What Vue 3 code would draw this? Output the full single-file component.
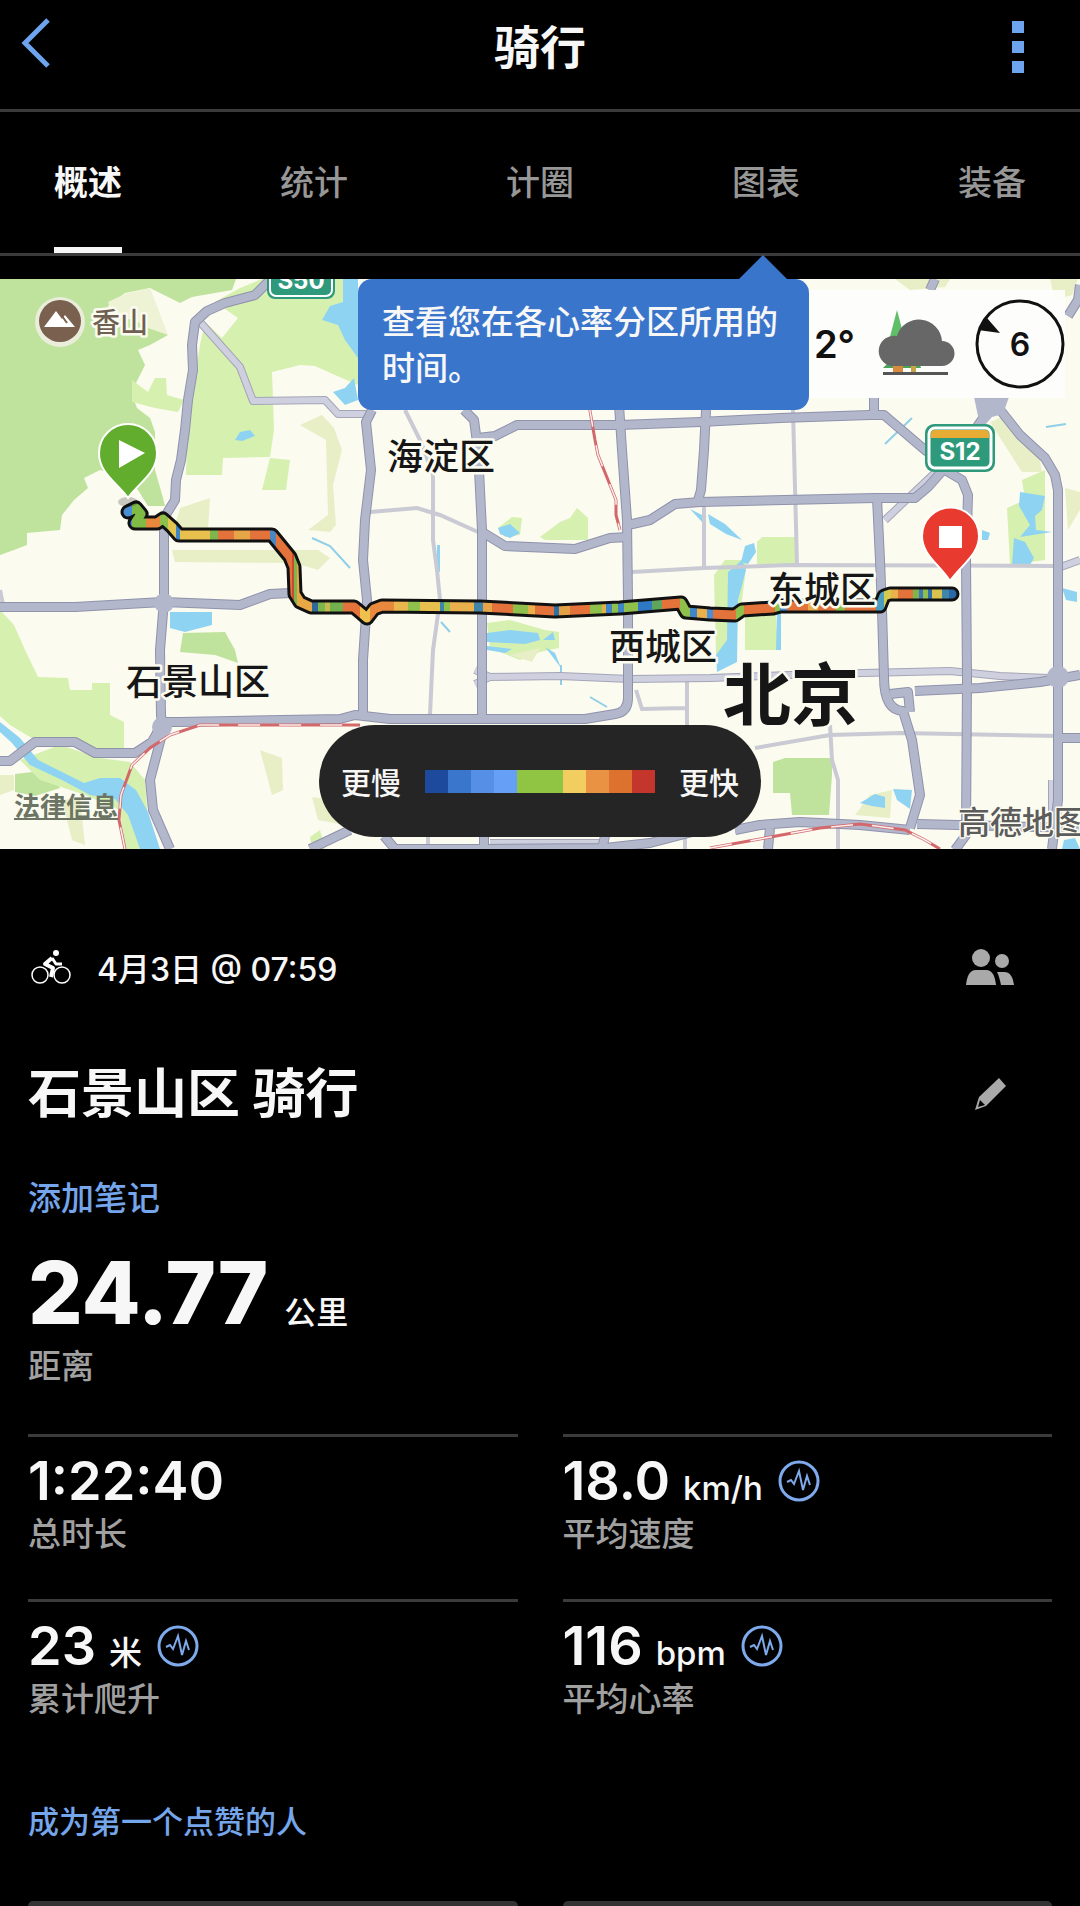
<template>
  <div class="page">
    <header class="header">
      <button class="icon-button" aria-label="返回">
        <svg width="32" height="52" viewBox="0 0 32 52">
          <path d="M28 3 5 26 28 49" fill="none" stroke="#6ea4ee" stroke-width="5" />
        </svg>
      </button>
      <h1>骑行</h1>
      <button class="icon-button" aria-label="更多">
        <svg width="12" height="52" viewBox="0 0 12 52" fill="#6ea4ee">
          <rect width="12" height="12" />
          <rect y="20" width="12" height="12" />
          <rect y="40" width="12" height="12" />
        </svg>
      </button>
    </header>

    <nav class="tabs">
      <button
        v-for="tab in tabs"
        :key="tab"
        :class="['tab', { active: tab === activeTab }]"
        @click="activeTab = tab"
      >{{ tab }}</button>
    </nav>

    <section class="map">
      <svg class="map-canvas" viewBox="0 279 1080 570" role="img" aria-label="骑行路线">
        <defs>
          <linearGradient id="speed" gradientUnits="userSpaceOnUse" x1="120" y1="0" x2="960" y2="0">
            <stop v-for="(stop, i) in routeStops" :key="i" :offset="stop.offset" :stop-color="stop.color" />
          </linearGradient>
        </defs>

        <rect y="279" width="1080" height="570" fill="#fbfbf0" />

        <!-- parks and fields -->
        <path v-for="(d, i) in forest" :key="'f' + i" :d="d" fill="#bfe39d" />
        <path v-for="(d, i) in parks" :key="'p' + i" :d="d" fill="#d6f0b0" />
        <path v-for="(d, i) in fields" :key="'b' + i" :d="d" fill="#e8efc6" />
        <path d="M108 302 125 294 150 288 168 335 148 328 138 322 112 312Z" fill="#eef3d5" />
        <path v-for="(d, i) in water" :key="'w' + i" :d="d" fill="#8fd3f2" />
        <path d="M312 538 330 546 350 568M885 444 912 418M1046 427 1066 424M590 697 607 707M441 622 450 632M561 665 561 685" fill="none" stroke="#8fcfe8" stroke-width="2" />

        <!-- roads -->
        <g fill="none" stroke="#c9cad3" stroke-width="4">
          <path v-for="(d, i) in minorRoads" :key="'m' + i" :d="d" />
        </g>
        <g fill="none" stroke-linejoin="round">
          <g stroke="#a4a5b8" stroke-width="8">
            <path v-for="(d, i) in lightRoads" :key="i" :d="d" />
          </g>
          <g stroke="#cfd0df" stroke-width="6">
            <path v-for="(d, i) in lightRoads" :key="i" :d="d" />
          </g>
          <g stroke="#8f92ab" stroke-width="10">
            <path v-for="(d, i) in mainRoads" :key="i" :d="d" />
          </g>
          <path d="M974 397H1009L1003 414 992 417 984 426 978 416Z" fill="#b3b7cc" />
          <circle cx="164" cy="603" r="10" fill="#b3b7cc" />
          <circle cx="1058" cy="677" r="11" fill="#b3b7cc" />
          <circle cx="162" cy="727" r="10" fill="#b3b7cc" />
          <g stroke="#b3b7cc" stroke-width="8">
            <path v-for="(d, i) in mainRoads" :key="i" :d="d" />
          </g>
        </g>

        <!-- railways -->
        <g fill="none">
          <g stroke="#d3686b" stroke-width="3">
            <path v-for="(d, i) in railways" :key="i" :d="d" />
          </g>
          <g stroke="#fbeeee" stroke-width="1.5" stroke-dasharray="22 19">
            <path v-for="(d, i) in railways" :key="i" :d="d" />
          </g>
        </g>

        <!-- recorded route -->
        <g fill="none" stroke-linecap="round" stroke-linejoin="round">
          <path :d="route" stroke="#111" stroke-width="15" />
          <path :d="route" stroke="url(#speed)" stroke-width="9" />
        </g>

        <!-- road shields -->
        <g class="shield">
          <rect x="267" y="254" width="68" height="45" rx="8" fill="#2f9a7b" />
          <rect x="270" y="257" width="62" height="39" rx="6" fill="none" stroke="#fff" stroke-width="2" />
          <text x="301" y="289">S50</text>
          <rect x="925" y="424" width="70" height="48" rx="9" fill="#2f9a7b" />
          <rect x="929" y="428" width="62" height="40" rx="6" fill="none" stroke="#fff" stroke-width="3" />
          <path d="M931 438V434Q931 430 935 430H985Q989 430 989 434V438Z" fill="#e8ab33" />
          <text x="960" y="460">S12</text>
        </g>

        <!-- mountain poi -->
        <circle cx="60" cy="322" r="25" fill="#e9edda" />
        <circle cx="60" cy="321" r="21" fill="#79604f" />
        <path d="M44 327 56 311 62 319 65 315 75 327Z" fill="#fff" />
        <path d="M62 316 67 323" stroke="#79604f" stroke-width="2" />

        <g class="place">
          <text class="poi" x="92" y="333">香山</text>
          <text x="387" y="470">海淀区</text>
          <text x="126" y="695">石景山区</text>
          <text x="609" y="660">西城区</text>
          <text x="768" y="603">东城区</text>
          <text class="city" x="723" y="720">北京</text>
          <text class="provider" x="958" y="834">高德地图</text>
        </g>

        <!-- start and finish pins -->
        <ellipse cx="128" cy="502" rx="10" ry="5" fill="#000" opacity="0.2" />
        <path d="M128 498C118 483 99 474 99 453A29 29 0 0 1 157 453C157 474 138 483 128 498Z" fill="#62ad2e" stroke="#fff" stroke-width="2" />
        <path d="M119 440V468L145 453Z" fill="#fff" />
        <path d="M950 581C940 565 922 555 922 536A28 28 0 0 1 979 536C979 555 961 565 950 581Z" fill="#e93a30" stroke="#fff" stroke-width="2" />
        <rect x="939" y="526" width="23" height="22" fill="#fff" />
      </svg>

      <div class="weather">
        <span class="temperature">2°</span>
        <svg width="80" height="68" viewBox="0 0 80 68">
          <path d="M22 0 32 38H12Z" fill="#5fbf68" />
          <path d="M8 58 14 52H44L46 58Z" fill="#49a457" />
          <rect x="18" y="56" width="10" height="8" fill="#d98a3d" />
          <rect x="36" y="56" width="5" height="8" fill="#c9a445" />
          <path d="M16 56A15 15 0 1 1 22 26A23 23 0 0 1 67 31A12 12 0 1 1 67 56Z" fill="#676767" />
          <rect x="8" y="62" width="65" height="3" fill="#555" />
        </svg>
        <div class="wind">
          <svg width="90" height="90" viewBox="0 0 90 90">
            <circle cx="45" cy="45" r="43" fill="none" stroke="#111" stroke-width="3" />
            <path d="M12 19 25 34 3 31Z" fill="#111" />
          </svg>
          <span>6</span>
        </div>
      </div>

      <div class="tooltip">查看您在各心率分区所用的时间。</div>

      <div class="legend">
        <span>更慢</span>
        <div class="scale">
          <i v-for="(color, i) in speedColors" :key="i" :style="{ background: color }"></i>
        </div>
        <span>更快</span>
      </div>

      <a class="legal" href="#">法律信息</a>
    </section>

    <main class="details">
      <div class="row meta">
        <svg width="40" height="36" viewBox="0 0 40 36">
          <g fill="none" stroke="#fff">
            <circle cx="9" cy="26" r="8" stroke-width="1.5" />
            <circle cx="31" cy="26" r="8" stroke-width="1.5" />
            <path d="M21 9 14 15 22 19 20 28" stroke-width="4" stroke-linejoin="round" />
            <path d="M21 9 25 15H31" stroke-width="3" stroke-linejoin="round" />
          </g>
          <circle cx="25" cy="4" r="3" fill="#fff" />
        </svg>
        <time>4月3日 @ 07:59</time>
        <button class="icon-button" aria-label="隐私">
          <svg width="48" height="36" viewBox="0 0 48 36" fill="#a9a9a9">
            <circle cx="15" cy="9" r="9" />
            <circle cx="36" cy="12" r="7" />
            <path d="M0 36C1 28 3 21 10 21H20C27 21 29 28 30 36Z" />
            <path d="M31 23H38C45 23 47 29 48 36H35C34 31 33 27 31 23Z" />
          </svg>
        </button>
      </div>

      <div class="row title">
        <h2>石景山区 骑行</h2>
        <button class="icon-button edit" aria-label="编辑">
          <svg width="34" height="34" viewBox="0 0 34 34">
            <path d="M25 1 32 9 12 29 1 33 5 20Z" fill="#a9a9a9" />
            <path d="M6 23 11 28 4 30Z" fill="#000" />
          </svg>
        </button>
      </div>

      <a class="note" href="#">添加笔记</a>

      <div class="distance">
        <strong>24.77</strong>
        <span class="unit">公里</span>
      </div>
      <div class="label">距离</div>

      <div class="stats">
        <div v-for="stat in stats" :key="stat.label" class="stat">
          <div class="value">
            <span class="number">{{ stat.value }}</span>
            <span v-if="stat.unit" class="unit">{{ stat.unit }}</span>
            <button v-if="stat.chart" class="icon-button chart" :aria-label="stat.label + '图表'">
              <svg width="42" height="42" viewBox="0 0 42 42" fill="none" stroke="#7ea9ea">
                <circle cx="21" cy="21" r="19" stroke-width="3" />
                <path d="M9 22 13 20 16 24 21 11 25 30 29 16 32 25" stroke-width="2" />
              </svg>
            </button>
          </div>
          <div class="label">{{ stat.label }}</div>
        </div>
      </div>

      <a class="likes" href="#">成为第一个点赞的人</a>

      <div class="cards">
        <div class="card"></div>
        <div class="card"></div>
      </div>
    </main>
  </div>
</template>

<script setup>
import { ref } from 'vue';

const tabs = ['概述', '统计', '计圈', '图表', '装备'];
const activeTab = ref('概述');

const stats = [
  { value: '1:22:40', label: '总时长' },
  { value: '18.0', unit: 'km/h', label: '平均速度', chart: true },
  { value: '23', unit: '米', label: '累计爬升', chart: true },
  { value: '116', unit: 'bpm', label: '平均心率', chart: true }
];

const speedColors = [
  '#1d4a9c', '#3a76cc', '#5590e6', '#66a0f6', '#90c544',
  '#90c544', '#f2ce60', '#ea9244', '#dd722e', '#c4352c'
];

const route = 'M128 512 136 508 141 514 135 523 157 523 163 519 172 527 179 535H272L290 557 294 567 295 594 300 602 311 607H354L360 612 367 618 374 609 382 606 480 607 555 611 620 608 681 603 686 612 710 614 735 615 742 610 773 608 780 606H880L884 596 890 594H952';

// [x, colour] pairs, each colour holds until the next x
const pace = [
  [120, '#4a8fd6'], [132, '#7fbb45'], [146, '#e8893d'], [160, '#8ec04b'], [168, '#e3c550'],
  [176, '#3f86c8'], [180, '#e8c04e'], [210, '#7fb54d'], [218, '#e3733a'], [234, '#e7a548'],
  [250, '#e3733a'], [270, '#4a86c0'], [276, '#e3733a'], [292, '#c94a30'], [294, '#7fb54d'],
  [297, '#e8a845'], [312, '#2f6a9c'], [318, '#7fb54d'], [325, '#c5bb4d'], [330, '#74b04d'],
  [343, '#e3733a'], [360, '#f0c04e'], [370, '#e8893d'], [394, '#e9b84c'], [408, '#8ec04b'],
  [420, '#e8c04e'], [440, '#3f86a8'], [444, '#8ec04b'], [450, '#e9b04c'], [474, '#3f86a8'],
  [483, '#e7a548'], [492, '#e3733a'], [513, '#8ec04b'], [528, '#e9b04c'], [535, '#e3733a'],
  [554, '#2f6fa8'], [559, '#e3a045'], [570, '#e3733a'], [590, '#8ec04b'], [602, '#e3b048'],
  [606, '#3f86c8'], [612, '#8ec04b'], [618, '#3f86c8'], [624, '#8ec04b'], [638, '#2f78c4'],
  [652, '#5fa55d'], [662, '#e3733a'], [680, '#8ec04b'], [690, '#3f86c8'], [697, '#e9b04c'],
  [707, '#4a8fd6'], [713, '#e3733a'], [736, '#8ec04b'], [744, '#e3733a'], [775, '#8ec04b'],
  [780, '#4a8fd6'], [787, '#e3733a'], [808, '#e9b04c'], [818, '#e3733a'], [836, '#8ec04b'],
  [845, '#e3733a'], [876, '#4a9cc0'], [884, '#d5c94e'], [891, '#e9b04c'], [898, '#e3733a'],
  [913, '#7fb54d'], [919, '#3f78b8'], [923, '#8ec04b'], [928, '#2f6fa8'], [932, '#d9c24e'],
  [942, '#3f86a8'], [949, '#2a68a8'], [960, '#2a68a8']
];

const routeStops = pace.slice(0, -1).flatMap(([x, color], i) => [
  { offset: (x - 120) / 840, color },
  { offset: (pace[i + 1][0] - 120) / 840, color }
]);

const forest = [
  'M0 279H236L232 290 192 297 180 303 150 288 125 293 108 306 112 316 145 322 168 335 150 345 138 350 145 365 135 385 132 395 137 408 150 418 155 432 155 470 163 498 165 506 148 506 138 490 125 478 100 470 84 478 88 488 74 500 62 515 60 530 27 533V545L14 550 0 555Z',
  'M15 774 50 770 60 788 35 796 15 792Z',
  'M183 633 225 632 235 650 238 663 215 655 180 652Z',
  'M773 762 785 758H832V775L829 815H792L790 793H773Z'
];

const parks = [
  'M262 279H358V385L335 375 315 366 300 365 272 372 274 430 270 457 223 458 222 475H186L188 420 200 345 205 322 222 338 238 318 215 302 240 288Z',
  'M270 458 290 460 286 490H262L268 466Z',
  'M132 380 148 392 155 378H166L167 395 184 400 178 412 155 408 132 402Z',
  'M0 610 14 625 25 650 38 677 68 678 70 690H92V683H110V715L124 722V748L95 750 70 740H35L10 725 0 716Z',
  'M20 760 60 745 100 758 130 762 145 780 150 849H125L120 810 85 795 40 780Z',
  'M540 537 560 522 570 518 577 508 588 518V540H545Z',
  'M498 528 512 517 522 518 520 535 505 537Z',
  'M757 542 762 537H795V565H757Z',
  'M487 623 510 620 545 630 559 632V648L540 652 520 660 490 648Z',
  'M714 575 725 560H747L742 600 735 640 716 655Z',
  'M745 605H775L778 650H745Z',
  'M1007 508 1025 500 1022 480 1045 470V560L1010 565Z',
  'M310 837 320 830 325 849H312Z'
];

const fields = [
  'M300 425 322 415 334 428 342 450 333 485 336 525 330 532 308 530 328 515 326 440Z',
  'M180 508 210 498 208 530 198 542 172 535Z',
  'M172 550H318L330 558 318 570 295 563 175 562Z',
  'M990 422 1000 418 1025 440 1040 460 1042 472 1022 472Z',
  'M260 750 282 758 283 790 272 795Z',
  'M312 797 335 800 345 825 318 820Z',
  'M0 775H14V790L0 795Z',
  'M62 800 80 798 85 845 72 840Z',
  'M895 279H950L945 287 910 290Z',
  'M1050 279H1078L1072 295 1055 300Z',
  'M855 815 870 795 892 790 890 818Z',
  'M510 655 540 648 532 662Z',
  'M1065 488 1080 492V510L1068 530Z'
];

const water = [
  'M343 279H358V358L345 340 338 325 322 320 330 306 343 302Z',
  'M333 392 345 388 354 378 358 400 345 405Z',
  'M235 440 240 432 250 430 255 436 242 441Z',
  'M0 722 20 738 38 760 60 771 84 783 100 778H120L136 790 148 812 160 849H140L128 815 115 799 90 795 62 780 30 765 12 743 0 732Z',
  'M170 612H212V625L185 632 170 628Z',
  'M487 633 510 630 538 633 540 640 525 644 487 642Z',
  'M487 646 512 649 505 653 487 650ZM543 640 553 632 555 640ZM545 647 555 653 561 668 552 656Z',
  'M498 528 510 524 520 533 510 538 500 534Z',
  'M690 509 704 516 702 522ZM708 514 725 524 742 540 726 534 710 524Z',
  'M745 546 754 543 756 552 748 564 741 562Z',
  'M728 572 742 560 746 570 738 600 737 662 717 672 716 655 727 640Z',
  'M777 608H781V650H776Z',
  'M1020 492 1045 496 1042 510 1035 516 1036 530 1052 532 1020 537 1030 525 1019 506Z',
  'M1014 538 1025 542 1034 558 1030 565H1012Z',
  'M860 803 875 794 885 797V808L872 806Z',
  'M893 789 912 790 910 809 897 800Z',
  'M1062 588 1077 592V602L1066 600Z',
  'M437 545H440V572H437ZM1064 840 1075 838 1080 849H1062ZM982 530 990 533 988 540H982Z'
];

const minorRoads = [
  'M405 410 421 442 433 475V540L437 570 440 600 433 650 430 715',
  'M370 512 417 508 440 515 478 532',
  'M704 505V568',
  'M632 572 704 568 790 565 1055 566',
  'M793 410 797 565',
  'M636 690 642 709 686 708M687 682V728',
  'M755 748 830 735 900 733 1060 736',
  'M830 725 832 760 838 780V849',
  'M0 590 3 605M428 836V849M685 836V849'
];

const lightRoads = [
  'M200 322 240 367 253 401 325 400 338 414H368',
  'M482 677 560 676 630 679 710 678 820 674 950 671 1000 676 1050 678',
  'M475 670 490 677 475 684',
  'M940 468 885 520',
  'M490 843H600M1058 568 1080 560M1052 780V830'
];

const mainRoads = [
  'M270 280 255 295 225 303 207 311 195 322 192 345 193 370 188 400 185 430 181 460 176 480 175 500 164 518V600L160 650 161 715 163 730 150 780 153 810 170 849',
  'M0 607H75L145 603 164 602 240 605 270 594 290 593',
  'M0 761H10L35 742H75L95 753H135L152 742 163 722H180L340 719 355 715 390 719H585L615 714Q628 712 628 698V600L627 520 622 450 619 405',
  'M372 410 366 422 371 470 365 520 363 560 367 600 363 660V716',
  'M464 410 474 420 478 450 482 530V719',
  'M478 438 495 436 517 425H620L700 422 780 418 870 415H884L925 450 940 460',
  'M874 397V415',
  'M706 410 704 450 701 490 697 504',
  'M628 525 650 520 675 504 700 502 875 498H915L928 487 943 470 972 434 990 408',
  'M482 532 505 546 575 549 610 538 628 537',
  'M877 498 880 560 882 610 884 677Q884 710 903 711L912 740 920 795 910 828',
  'M890 694 908 692 910 712',
  'M915 691 980 688 1040 682 1080 675',
  'M945 470 962 480 968 495 966 560 967 680 966 835 955 850',
  'M1001 411 1020 435 1045 458 1055 475 1058 490V800L1052 849',
  'M1060 738H1080M935 279 930 290M1080 285 1078 300 1068 316',
  'M735 830 760 825 800 822 860 825 910 830M917 824 1080 828M770 828 768 849',
  'M310 849 350 830M384 836 395 849H480L605 848 650 843 700 830M484 836V849M605 836 602 849'
];

const railways = [
  'M589 405 595 440 598 455 608 480 616 500V515L620 530',
  'M125 849 119 820 121 795 132 765 150 748 170 735 200 725H360',
  'M710 848 765 838 820 828 860 824 905 830 925 840 940 849'
];
</script>

<style>
body {
  background: #000;
}
</style>

<style scoped>
.page {
  display: flex;
  flex-direction: column;
  min-height: 100vh;
  background: #000;
  color: #f7f7f7;
  font-family: Inter, "Noto Sans CJK SC", sans-serif;
}

.icon-button {
  display: flex;
  padding: 0;
  border: none;
  background: none;
  cursor: pointer;
}

a {
  color: #75a5ea;
  font-weight: 500;
  text-decoration: none;
}

.header {
  display: flex;
  justify-content: space-between;
  align-items: center;
  padding: 17px 56px 32px 20px;
  border-bottom: 3px solid #3b3b3b;
}

h1 {
  flex: 1;
  margin: 0 0 0 16px;
  text-align: center;
  font-size: 46px;
  line-height: 60px;
}

.header .icon-button {
  height: 60px;
}

.header .icon-button:last-child {
  padding-top: 4px;
}

.tabs {
  display: flex;
  justify-content: space-between;
  padding: 0 54px;
  border-bottom: 3px solid #3b3b3b;
}

.tab {
  padding: 49px 0 42px;
  border: none;
  border-bottom: 6px solid transparent;
  background: none;
  color: #979797;
  font-family: inherit;
  font-size: 34px;
  font-weight: 500;
  line-height: 44px;
  cursor: pointer;
}

.tab.active {
  border-color: #f7f7f7;
  color: #f7f7f7;
  font-weight: 700;
}

.map {
  position: relative;
  margin-top: 23px;
}

.map-canvas {
  display: block;
  width: 100%;
}

.place text {
  fill: #161616;
  stroke: #fbfbf0;
  stroke-width: 5px;
  stroke-linejoin: round;
  paint-order: stroke;
  font-size: 36px;
  font-weight: 500;
}

.place .poi {
  fill: #6f6053;
  font-size: 28px;
}

.place .city {
  font-size: 68px;
  font-weight: 700;
}

.place .provider {
  fill: #5c5c5c;
  stroke-width: 3px;
  font-size: 32px;
}

.shield text {
  fill: #fff;
  font-size: 24px;
  font-weight: 700;
  text-anchor: middle;
}

.weather {
  position: absolute;
  top: 11px;
  right: 15px;
  display: flex;
  align-items: center;
  gap: 20px;
  height: 108px;
  background: rgba(253, 253, 251, 0.96);
  color: #111;
  font-weight: 600;
}

.temperature {
  padding-left: 30px;
  font-size: 38px;
}

.wind {
  display: grid;
  place-items: center;
  font-size: 32px;
}

.wind > * {
  grid-area: 1 / 1;
}

.tooltip {
  position: absolute;
  top: 0;
  right: 271px;
  box-sizing: border-box;
  width: 451px;
  padding: 20px 24px 19px 24px;
  border-radius: 14px;
  background: #3a75cc;
  color: #f7f7f7;
  font-size: 33px;
  font-weight: 500;
  line-height: 46px;
}

.tooltip::before {
  content: "";
  position: absolute;
  right: 22px;
  bottom: 100%;
  border: 24px solid transparent;
  border-top: 0;
  border-bottom-color: #3a75cc;
}

.legend {
  position: absolute;
  bottom: 12px;
  left: 50%;
  transform: translateX(-50%);
  display: flex;
  align-items: center;
  gap: 24px;
  padding: 0 22px;
  height: 112px;
  border-radius: 56px;
  background: #252525;
  color: #f7f7f7;
  font-size: 30px;
  font-weight: 500;
  white-space: nowrap;
}

.scale {
  display: flex;
}

.scale i {
  width: 23px;
  height: 23px;
}

.legal {
  position: absolute;
  bottom: 24px;
  left: 14px;
  color: #6c7564;
  font-size: 26px;
  font-weight: 700;
  line-height: 36px;
  text-decoration: underline;
}

.details {
  display: flex;
  flex: 1;
  flex-direction: column;
  align-items: flex-start;
  padding: 94px 28px 0;
}

.row {
  display: flex;
  align-items: center;
  width: 100%;
}

.row .icon-button {
  margin-left: auto;
  margin-right: 38px;
}

.row .edit {
  margin-right: 44px;
}

.meta {
  gap: 26px;
  height: 48px;
  padding-left: 3px;
  box-sizing: border-box;
}

time {
  font-size: 32px;
  font-weight: 500;
}

.title {
  margin-top: 71px;
}

h2 {
  margin: 0;
  font-size: 53px;
  line-height: 64px;
}

.note {
  margin-top: 50px;
  font-size: 33px;
  line-height: 44px;
}

.distance {
  display: flex;
  align-items: baseline;
  gap: 16px;
  margin-top: 29px;
}

.distance strong {
  font-size: 86px;
  font-weight: 800;
  line-height: 88px;
}

.unit {
  font-size: 32px;
  font-weight: 500;
}

.label {
  color: #a0a0a0;
  font-size: 33px;
  font-weight: 500;
  line-height: 44px;
}

.distance + .label {
  margin-top: 7px;
}

.stats {
  display: grid;
  grid-template-columns: 1fr 1fr;
  column-gap: 45px;
  width: 100%;
  margin-top: 46px;
}

.stat {
  padding: 14px 0 43px;
  border-top: 3px solid #3b3b3b;
}

.value {
  display: flex;
  align-items: baseline;
  gap: 13px;
  height: 60px;
  margin-bottom: 1px;
  line-height: 60px;
}

.number {
  font-size: 54px;
  font-weight: 600;
}

.value .unit {
  font-size: 33px;
}

.chart {
  align-self: center;
  margin-left: 2px;
}

.likes {
  margin-top: 38px;
  font-size: 31px;
  line-height: 40px;
}

.cards {
  display: grid;
  flex: 1;
  grid-template-columns: 1fr 1fr;
  column-gap: 45px;
  width: 100%;
  margin-top: 59px;
}

.card {
  border-radius: 14px 14px 0 0;
  background: #333;
}
</style>
